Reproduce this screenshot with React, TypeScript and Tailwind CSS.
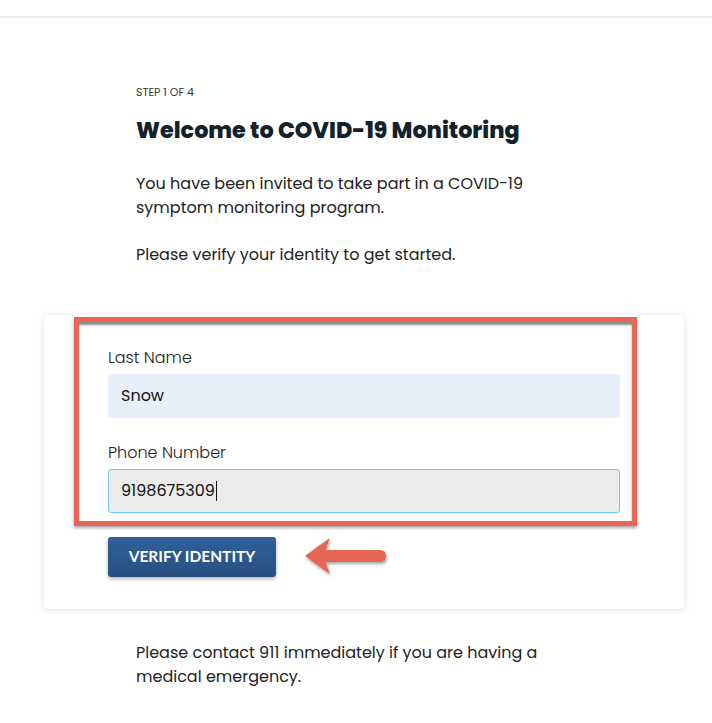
import React from 'react';

const FONT = { fontFamily: 'Poppins, Inter, "Noto Sans", sans-serif' };

function Arrow() {
  return (
    <svg width="96" height="46" viewBox="0 0 96 46" className="absolute left-[300px] top-[534px]">
      <defs>
        <filter id="sh" x="-20%" y="-30%" width="140%" height="160%">
          <feDropShadow dx="1" dy="2" stdDeviation="1.5" floodColor="#000" floodOpacity="0.35" />
        </filter>
      </defs>
      <path
        d="M5 22 Q18 12 30 4 Q27 11 26 16 L80 16 Q86 16 86 22 Q86 28 80 28 L26 28 Q27 33 30 40 Q18 32 5 22 Z"
        fill="#e66657"
        filter="url(#sh)"
      />
    </svg>
  );
}

export default function App() {
  return (
    <div className="relative w-[712px] h-[723px] bg-white overflow-hidden text-[#1f2a30]" style={FONT}>
      <div className="h-[16px]" />
      <div className="h-[2px] bg-[#e8ecf0]" />

      <div className="w-[440px] mx-auto pt-[67px]">
        <p className="text-[11px] leading-[14px] text-[#333]">STEP 1 OF 4</p>
        <h1 className="mt-[17px] text-[22.3px] leading-[30px] font-extrabold text-[#14212a]">
          Welcome to COVID-19 Monitoring
        </h1>
        <p className="mt-[26px] w-[400px] text-[16px] leading-[24px] text-[#222]">
          You have been invited to take part in a COVID-19 symptom monitoring program.
        </p>
        <p className="mt-[23px] text-[16px] leading-[24px] text-[#222]">
          Please verify your identity to get started.
        </p>
      </div>

      <div className="ml-[44px] mt-[48px] w-[640px] bg-white rounded-[4px] shadow-[0_1px_6px_rgba(0,0,0,0.12)] px-[64px] pt-[32px] pb-[32px]">
        <label className="block text-[16px] leading-[22px] font-light text-[#222]">Last Name</label>
        <div className="mt-[5px] h-[44px] rounded-[3px] bg-[#e8eefa] flex items-center px-[13px] text-[16px] text-[#111]">
          Snow
        </div>
        <label className="block mt-[24px] text-[16px] leading-[22px] font-light text-[#222]">Phone Number</label>
        <div className="mt-[5px] h-[44px] rounded-[3px] bg-[#ebebeb] border border-[#6ccbea] flex items-center px-[12px] text-[16px] text-[#111]">
          9198675309<span className="inline-block w-px h-[20px] bg-[#111] ml-px" />
        </div>
        <button
          className="mt-[24px] w-[168px] h-[40px] rounded-[3px] bg-gradient-to-b from-[#30609b] to-[#27507f] text-white font-bold text-[15.5px] shadow-[0_2px_4px_rgba(0,0,0,0.3)]"
          style={{ fontFamily: 'Lato, "Open Sans", sans-serif' }}
        >
          VERIFY IDENTITY
        </button>
      </div>

      <div className="w-[440px] mx-auto mt-[32px]">
        <p className="w-[410px] text-[16px] leading-[24px] text-[#222]">
          Please contact 911 immediately if you are having a medical emergency.
        </p>
      </div>

      {/* annotation box */}
      <div className="absolute left-[74px] top-[317px] w-[563px] h-[209px] border-[5px] border-[#e66657] shadow-[0_2px_3px_rgba(0,0,0,0.35),inset_0_3px_2px_rgba(0,0,0,0.45)]" />
      <Arrow />
    </div>
  );
}
